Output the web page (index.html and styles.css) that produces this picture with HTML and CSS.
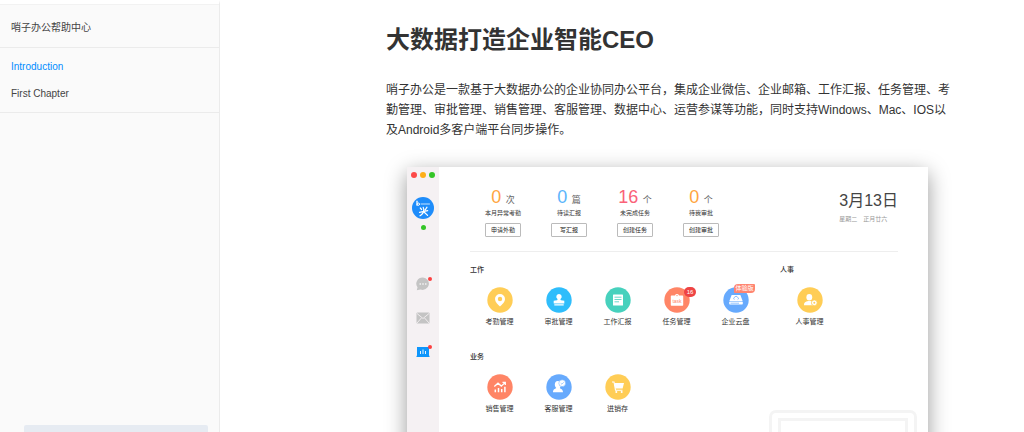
FILE: index.html
```html
<!DOCTYPE html>
<html lang="zh-CN">
  <head>
    <meta charset="utf-8">
    <meta name="viewport" content="width=device-width,initial-scale=1">
    <title>Introduction · 哨子办公帮助中心</title>
    <link rel="stylesheet" href="styles.css">
  </head>
<body>
  <div class="book">
    <nav class="summary">
      <a class="brand" href="#">哨子办公帮助中心</a>
      <ul class="chapters">
        <li><a class="active" href="#">Introduction</a></li>
        <li><a href="#">First Chapter</a></li>
      </ul>
      <div class="notice"></div>
    </nav>
    <main class="page">
      <h1>大数据打造企业智能CEO</h1>
      <p>哨子办公是一款基于大数据办公的企业协同办公平台，集成企业微信、企业邮箱、工作汇报、任务管理、考勤管理、审批管理、销售管理、客服管理、数据中心、运营参谋等功能，同时支持Windows、Mac、IOS以及Android多客户端平台同步操作。</p>

      <div class="window">
        <div class="rail">
          <div class="lights"><i class="red"></i><i class="amber"></i><i class="green"></i></div>
          <svg class="logo" viewBox="0 0 22 22">
            <circle cx="11" cy="11" r="11" fill="#1e8cfa"/>
            <g fill="none" stroke="#fff" stroke-linecap="round">
              <path d="M5 4.2v4" stroke-width="1.2"/>
              <circle cx="6.3" cy="7.2" r="1.2" stroke-width="1"/>
              <path d="M9 7h8.5" stroke-width="1" opacity=".75"/>
              <path d="M8.3 11l1.3 1.5M11.2 10.3l.6 2M15 10.2l-1.8 2.6M7.5 15.3l8.2-1.6M11.8 12.6c0 3-1.6 5-3.8 6.2M12.3 15.2l3.3 3.2" stroke-width="1.2"/>
            </g>
          </svg>
          <i class="online"></i>
          <div class="tools">
            <div class="tool">
              <svg viewBox="0 0 14 14">
                <path d="M7 .5a6.3 6.2 0 1 1-2.6 12L.8 13.3l.7-3A6.3 6.2 0 0 1 7 .5z" fill="#c4c4c4"/>
                <g fill="#fff"><circle cx="4.2" cy="7" r=".8"/><circle cx="7" cy="7" r=".8"/><circle cx="9.8" cy="7" r=".8"/></g>
              </svg>
              <i class="dot"></i>
            </div>
            <div class="tool">
              <svg viewBox="0 0 14 14">
                <rect x=".5" y="1.5" width="13" height="11" rx="1" fill="#c4c4c4"/>
                <path d="M1 2.5l6 5 6-5M1 12l4.4-5M13 12L8.600 7" fill="none" stroke="#f5f1f3" stroke-width=".9"/>
              </svg>
            </div>
            <div class="tool">
              <svg viewBox="0 0 14 14">
                <path d="M1 2h12v8.800H13.500V12H.5v-1.200H1z" fill="#0e96fb"/>
                <path d="M4.500 6v3M7 4.500V9M9.500 6v3" stroke="#fff" stroke-width=".9"/>
              </svg>
              <i class="dot"></i>
            </div>
          </div>
        </div>

        <div class="desk">
          <div class="overview">
            <div class="stat">
              <div class="count"><b class="orange">0</b> 次</div>
              <div class="what">本月异常考勤</div>
              <button type="button">申请外勤</button>
            </div>
            <div class="stat">
              <div class="count"><b class="blue">0</b> 篇</div>
              <div class="what">待读汇报</div>
              <button type="button">写汇报</button>
            </div>
            <div class="stat">
              <div class="count"><b class="pink">16</b> 个</div>
              <div class="what">未完成任务</div>
              <button type="button">创建任务</button>
            </div>
            <div class="stat">
              <div class="count"><b class="orange">0</b> 个</div>
              <div class="what">待我审批</div>
              <button type="button">创建审批</button>
            </div>
            <div class="today">
              <div class="date">3月13日</div>
              <div class="lunar"><span>星期二</span><span>正月廿六</span></div>
            </div>
          </div>

          <div class="row">
            <section>
              <h2>工作</h2>
              <div class="apps">
                <a class="app" href="#">
                  <svg viewBox="0 0 26 26">
                    <circle cx="13" cy="13" r="12.700" fill="#ffcd56"/>
                    <path d="M13 7a5 5 0 0 1 5 5c0 3-3 5.500-5 7.500-2-2-5-4.500-5-7.500a5 5 0 0 1 5-5z" fill="#fff"/>
                    <circle cx="13" cy="12" r="2.200" fill="#ffcd56"/>
                  </svg>
                  考勤管理
                </a>
                <a class="app" href="#">
                  <svg viewBox="0 0 26 26">
                    <circle cx="13" cy="13" r="12.700" fill="#2fbdfb"/>
                    <path d="M13 7a2.700 2.700 0 0 1 1.700 4.800c-.4.5-.3 1.200.3 1.400l3.300.6v2.700H7.700v-2.700l3.300-.6c.6-.2.7-.9.300-1.400A2.700 2.700 0 0 1 13 7zM8.300 17.200h9.400v1.300H8.300z" fill="#fff"/>
                  </svg>
                  审批管理
                </a>
                <a class="app" href="#">
                  <svg viewBox="0 0 26 26">
                    <circle cx="13" cy="13" r="12.700" fill="#47d1bd"/>
                    <rect x="8" y="7.500" width="10" height="11" rx=".6" fill="#fff"/>
                    <path d="M9.500 10.200h7M9.500 12.500h7M9.500 14.800h4.500" stroke="#47d1bd" stroke-width=".8"/>
                  </svg>
                  工作汇报
                </a>
                <a class="app" href="#">
                  <svg viewBox="0 0 26 26">
                    <circle cx="13" cy="13" r="12.700" fill="#ff8566"/>
                    <path d="M7.500 8.500H11a2.100 2.100 0 0 1 4 0h3.500a.7.7 0 0 1 .7.700v8.800a.7.700 0 0 1-.7.700h-11a.7.700 0 0 1-.7-.7V9.200a.7.700 0 0 1 .7-.7z" fill="#fff"/>
                    <circle cx="13" cy="8.600" r=".7" fill="#ff8566"/>
                    <text class="task" x="13" y="16">task</text>
                  </svg>
                  任务管理
                  <span class="badge">16</span>
                </a>
                <a class="app" href="#">
                  <svg viewBox="0 0 26 26">
                    <circle cx="13" cy="13" r="12.700" fill="#67aafd"/>
                    <path d="M8.600 8h8.800l2.300 6.300H6.300z" fill="#fff"/>
                    <rect x="6.200" y="14.800" width="13.600" height="2.800" rx=".8" fill="#fff"/>
                    <path d="M7.500 16.200h8.500" stroke="#67aafd" stroke-width=".7"/>
                    <path d="M11.300 12.500a1.200 1.200 0 0 1 .3-2.200 1.600 1.600 0 0 1 3 .1 1.100 1.100 0 0 1 .1 2.100" fill="none" stroke="#67aafd" stroke-width=".8"/>
                  </svg>
                  企业云盘
                  <span class="trial">体验版</span>
                </a>
              </div>
            </section>
            <section>
              <h2>人事</h2>
              <div class="apps">
                <a class="app" href="#">
                  <svg viewBox="0 0 26 26">
                    <circle cx="13" cy="13" r="12.700" fill="#ffcd56"/>
                    <ellipse cx="12.300" cy="10.200" rx="2.900" ry="3.200" fill="#fff"/>
                    <path d="M7 18c0-3 2.300-3.700 5.300-3.900 1.500 0 3 .3 3.700.9V18.200H7z" fill="#fff"/>
                    <circle cx="17.300" cy="15.800" r="2.900" fill="#fff" stroke="#ffcd56" stroke-width=".8"/>
                    <circle cx="17.300" cy="15.800" r="1" fill="#ffcd56"/>
                  </svg>
                  人事管理
                </a>
              </div>
            </section>
          </div>

          <div class="row">
            <section>
              <h2>业务</h2>
              <div class="apps">
                <a class="app" href="#">
                  <svg viewBox="0 0 26 26">
                    <circle cx="13" cy="13" r="12.700" fill="#ff8566"/>
                    <path d="M7.300 12.500l3.700-3.300 3.300 2.900 3.700-3.500M15.500 8.300h2.800v2.800" fill="none" stroke="#fff" stroke-width="1.300"/>
                    <path d="M8.300 18.300v-2.800M11.500 18.300V14M14.700 18.300V15M17.900 18.300v-5.500" stroke="#fff" stroke-width="1.500"/>
                  </svg>
                  销售管理
                </a>
                <a class="app" href="#">
                  <svg viewBox="0 0 26 26">
                    <circle cx="13" cy="13" r="12.700" fill="#67aafd"/>
                    <path d="M11.800 7c2 0 3.200 1.500 3.200 3.600 0 1.600-.7 2.700-1.200 3.300.8 1 3.200 1 3.200 4.300H7c0-3 2-3.400 3.300-4.300-.9-.8-1.500-1.800-1.500-3.300C8.800 8.500 9.800 7 11.800 7z" fill="#fff"/>
                    <circle cx="16.200" cy="9.200" r="3.400" fill="#fff" stroke="#67aafd" stroke-width=".5"/>
                    <path d="M14.800 9.200l1.100 1 1.800-1.900" fill="none" stroke="#67aafd" stroke-width=".6"/>
                  </svg>
                  客服管理
                </a>
                <a class="app" href="#">
                  <svg viewBox="0 0 26 26">
                    <circle cx="13" cy="13" r="12.700" fill="#ffcd56"/>
                    <path d="M7 8h2l1.500 8.200h7" fill="none" stroke="#fff" stroke-width="1.100"/>
                    <path d="M9.300 9h9.700l-1.400 5.500h-7.300z" fill="#fff"/>
                    <circle cx="11.300" cy="18" r="1" fill="#fff"/><circle cx="16.700" cy="18" r="1" fill="#fff"/>
                  </svg>
                  进销存
                </a>
              </div>
            </section>
            <div class="frame"><div></div></div>
          </div>
        </div>
      </div>
    </main>
  </div>
</body>
</html>
```

FILE: styles.css
```css
html, body {
  margin: 0;
  padding: 0;
  font-family: "Liberation Sans", "Noto Sans CJK SC", sans-serif;
  color: #333;
  background: #fff;
}
a {
  color: inherit;
  text-decoration: none;
}
i {
  display: block;
  border-radius: 50%;
}
svg {
  display: block;
}
.book {
  display: flex;
  height: 100vh;
  overflow: hidden;
}

/* sidebar */
.summary {
  display: flex;
  flex-direction: column;
  flex: none;
  box-sizing: border-box;
  width: 220px;
  border-top: 4px solid #fff;
  border-right: 1px solid #ebebeb;
  background: #fafafa;
  font-size: 10px;
  color: #444;
}
.brand {
  padding: 9px 11px 5px;
  border-top: 1px solid #f2f2f2;
  line-height: 28px;
}
.chapters {
  margin: 0;
  padding: 5px 11px;
  list-style: none;
  border-top: 1px solid #ebebeb;
  border-bottom: 1px solid #ebebeb;
  line-height: 27px;
}
.active {
  color: #008cff;
}
.notice {
  height: 7px;
  margin: auto 11px 0 24px;
  border-radius: 2px 2px 0 0;
  background: #e6ebf2;
}

/* article */
.page {
  flex: 1;
  min-width: 0;
  padding: 25px 73px 0 166px;
}
h1 {
  margin: 0;
  font-size: 24px;
  line-height: 30px;
}
p {
  margin: 25px 0 27px;
  font-size: 12px;
  line-height: 20px;
}

/* client window */
.window {
  display: flex;
  height: 380px;
  margin: 0 23px 0 21px;
  background: #fff;
  box-shadow: 0 6px 20px rgba(0, 0, 0, .4);
}
.rail {
  display: flex;
  flex-direction: column;
  align-items: center;
  flex: none;
  width: 32px;
  padding-top: 5px;
  background: #f5f1f3;
}
.lights {
  display: flex;
  gap: 3px;
}
.lights i {
  width: 6px;
  height: 6px;
}
.red { background: #fc4a48; }
.amber { background: #fdae18; }
.green { background: #34c527; }
.logo {
  width: 22px;
  margin: 19px 0 6px;
}
.online {
  width: 5px;
  height: 5px;
  background: #34c527;
}
.tools {
  display: grid;
  gap: 20px;
  margin-top: 47px;
}
.tool {
  position: relative;
  width: 14px;
  height: 14px;
}
.dot {
  position: absolute;
  top: 0;
  right: -2px;
  width: 4px;
  height: 4px;
  background: #fc4040;
}
.desk {
  flex: 1;
  padding: 20px 30px 0 31px;
}
.overview {
  display: flex;
  padding-bottom: 14px;
  border-bottom: 1px solid #eee;
}
.stat {
  width: 66px;
  text-align: center;
}
.count {
  height: 21px;
  font-size: 9px;
  line-height: 21px;
  color: #666;
}
.count b {
  margin-right: 2px;
  font-size: 18px;
  font-weight: normal;
}
.orange { color: #ffa53f; }
.blue { color: #5cb5fb; }
.pink { color: #fa6278; }
.what {
  font-size: 6px;
  line-height: 10px;
  color: #333;
}
.stat button {
  display: block;
  width: 36px;
  height: 14px;
  margin: 5px auto 0;
  padding: 0;
  border: 1px solid #bbb;
  border-radius: 1px;
  background: #fff;
  font: 6px/12px "Liberation Sans", "Noto Sans CJK SC", sans-serif;
  color: #222;
}
.today {
  margin-left: auto;
}
.date {
  font-size: 16px;
  line-height: 28px;
  color: #444;
}
.lunar {
  display: flex;
  gap: 6px;
  font-size: 6px;
  line-height: 8px;
  color: #999;
}
.row {
  display: flex;
  gap: 15px;
  margin-top: 12px;
}
.row + .row {
  margin-top: 23px;
}
h2 {
  margin: 0 0 11px;
  font-size: 7px;
  font-weight: 500;
  line-height: 12px;
}
.apps {
  display: flex;
}
.app {
  position: relative;
  width: 59px;
  font-size: 7px;
  line-height: 12px;
  text-align: center;
  color: #333;
}
.app svg {
  width: 26px;
  margin: 0 auto 3px;
}
.task {
  font-size: 5px;
  text-anchor: middle;
  fill: #ff8566;
}
.badge {
  position: absolute;
  top: 0;
  left: 37px;
  width: 12px;
  border-radius: 5px;
  background: #ee4444;
  font-size: 6px;
  line-height: 10px;
  color: #fff;
}
.trial {
  position: absolute;
  top: -3px;
  left: 28px;
  width: 21px;
  border-radius: 4px 1px;
  background: #ff8570;
  font-size: 6px;
  line-height: 9px;
  color: #fff;
}
.frame {
  flex: none;
  box-sizing: border-box;
  width: 148px;
  height: 110px;
  margin: 59px -19px 0 auto;
  padding: 5px 6px;
  border: 3px solid #f4f4f4;
  border-radius: 7px;
}
.frame div {
  height: 90px;
  border: 3px solid #f4f4f4;
}
```
